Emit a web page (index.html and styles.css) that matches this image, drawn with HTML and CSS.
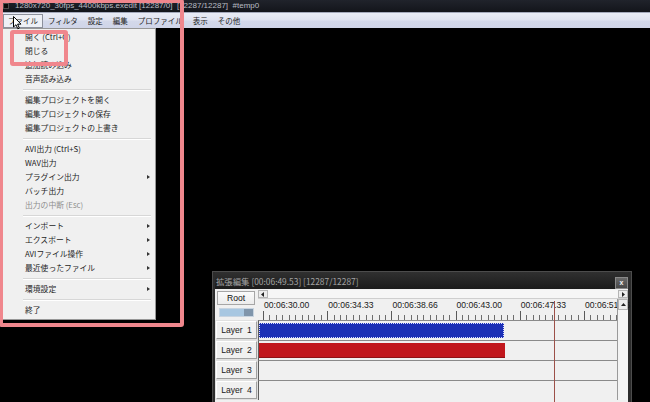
FILE: index.html
```html
<!DOCTYPE html>
<html lang="ja">
<head>
<meta charset="utf-8">
<title>AviUtl</title>
<link rel="stylesheet" href="styles.css">
</head>
<body>
<div class="screen">
  <header class="titlebar">
    <span class="app-icon"></span>
    <span class="title-text">1280x720_30fps_4400kbps.exedit [12287/0]&nbsp; [12287/12287]&nbsp; #temp0</span>
  </header>
  <nav class="menubar">
    <span class="menu-item active">ファイル</span>
    <span class="menu-item">フィルタ</span>
    <span class="menu-item">設定</span>
    <span class="menu-item">編集</span>
    <span class="menu-item">プロファイル</span>
    <span class="menu-item">表示</span>
    <span class="menu-item">その他</span>
  </nav>
  <main class="desktop">
    <ul class="dropdown">
      <li class="dd-item">開く (Ctrl+O)</li>
      <li class="dd-item">閉じる</li>
      <li class="dd-item">追加読み込み</li>
      <li class="dd-item">音声読み込み</li>
      <li class="dd-sep"></li>
      <li class="dd-item">編集プロジェクトを開く</li>
      <li class="dd-item">編集プロジェクトの保存</li>
      <li class="dd-item">編集プロジェクトの上書き</li>
      <li class="dd-sep"></li>
      <li class="dd-item">AVI出力 (Ctrl+S)</li>
      <li class="dd-item">WAV出力</li>
      <li class="dd-item sub">プラグイン出力</li>
      <li class="dd-item">バッチ出力</li>
      <li class="dd-item disabled">出力の中断 (Esc)</li>
      <li class="dd-sep"></li>
      <li class="dd-item sub">インポート</li>
      <li class="dd-item sub">エクスポート</li>
      <li class="dd-item sub">AVIファイル操作</li>
      <li class="dd-item sub">最近使ったファイル</li>
      <li class="dd-sep"></li>
      <li class="dd-item sub">環境設定</li>
      <li class="dd-sep"></li>
      <li class="dd-item">終了</li>
    </ul>

    <section class="exedit">
      <div class="ex-title">
        <span class="ex-title-text">拡張編集 [00:06:49.53] [12287/12287]</span>
        <span class="ex-close">x</span>
      </div>
      <div class="ex-client">
        <div class="ex-corner">
          <div class="root-btn">Root</div>
          <div class="zoom-slider"></div>
        </div>
        <div class="hscroll">
          <span class="sb-btn">
            <svg width="4" height="5" viewBox="0 0 4 5"><path d="M3 0 L0 2.5 L3 5 Z" fill="#222"/></svg>
          </span>
          <span class="hscroll-track"></span>
          <span class="sb-btn">
            <svg width="4" height="5" viewBox="0 0 4 5"><path d="M1 0 L4 2.5 L1 5 Z" fill="#222"/></svg>
          </span>
        </div>
        <div class="ruler">
          <span class="ruler-label">00:06:30.00</span>
          <span class="ruler-label">00:06:34.33</span>
          <span class="ruler-label">00:06:38.66</span>
          <span class="ruler-label">00:06:43.00</span>
          <span class="ruler-label">00:06:47.33</span>
          <span class="ruler-label">00:06:51.66</span>
        </div>
        <div class="vscroll">
          <span class="sb-btn up">
            <svg width="5" height="4" viewBox="0 0 5 4"><path d="M0 3 L2.5 0 L5 3 Z" fill="#222"/></svg>
          </span>
        </div>

        <div class="layer-head">Layer 1</div>
        <div class="track"><div class="clip clip-blue" style="width:245px"></div></div>
        <div class="layer-head">Layer 2</div>
        <div class="track"><div class="clip clip-red" style="width:246px"></div></div>
        <div class="layer-head">Layer 3</div>
        <div class="track"></div>
        <div class="layer-head">Layer 4</div>
        <div class="track"></div>
      </div>
      <div class="playhead"></div>
    </section>
  </main>

  <div class="mark mark-big"></div>
  <div class="mark mark-small"></div>
  <svg class="cursor" width="9" height="14" viewBox="0 0 9 14"><path d="M0.5 0.5 L0.5 11 L3 8.7 L4.8 12.8 L6.3 12.1 L4.6 8.1 L8 8.1 Z" fill="#fff" stroke="#000" stroke-width="1" stroke-linejoin="round"/></svg>
</div>
</body>
</html>
```

FILE: styles.css
```css
* {
  box-sizing: border-box;
  margin: 0;
  padding: 0;
}

html, body {
  width: 650px;
  height: 402px;
  overflow: hidden;
  background: #000;
}

body {
  font-family: "Noto Sans CJK JP", "Noto Sans", sans-serif;
}

.screen {
  position: relative;
  width: 650px;
  height: 402px;
  display: flex;
  flex-direction: column;
  overflow: hidden;
}

/* ---------- title bar ---------- */
.titlebar {
  height: 12px;
  flex: none;
  background: linear-gradient(#20232b, #13151b);
  display: flex;
  align-items: center;
  gap: 6px;
  padding-left: 3px;
}

.app-icon {
  width: 6px;
  height: 6px;
  background: #0a0a0a;
  border: 1px solid #4a4a4a;
}

.title-text {
  font: 8px/1 "Liberation Sans", sans-serif;
  color: #b9bcc3;
  white-space: nowrap;
}

/* ---------- menu bar ---------- */
.menubar {
  height: 16px;
  flex: none;
  background: linear-gradient(#e9ecf6 0%, #e0e3f0 45%, #d3d8ea 55%, #d0d5e8 100%);
  border-top: 1px solid #a4a9bb;
  display: flex;
  align-items: center;
  padding-left: 3px;
}

.menu-item {
  font-size: 7.5px;
  line-height: 12px;
  padding: 0 4px;
  color: #1c1c1c;
  border: 1px solid transparent;
  white-space: nowrap;
}

.menu-item.active {
  border-color: #8c909c;
  background: #eef0f6;
}

/* ---------- desktop ---------- */
.desktop {
  position: relative;
  flex: 1;
  background: #000;
}

/* ---------- dropdown ---------- */
.dropdown {
  position: absolute;
  left: 0;
  top: 0;
  width: 156px;
  list-style: none;
  background: #f0f0f0;
  border: 1px solid #979797;
  padding: 1px 2px 2px;
  z-index: 2;
}

.dd-item {
  position: relative;
  height: 14px;
  line-height: 14px;
  padding-left: 22px;
  font-size: 7.8px;
  color: #1e1e1e;
  white-space: nowrap;
}

.dd-item.disabled {
  color: #8e8e8e;
}

.dd-item.sub::after {
  content: "";
  position: absolute;
  left: 144px;
  top: 5px;
  border-left: 3px solid #333;
  border-top: 2px solid transparent;
  border-bottom: 2px solid transparent;
}

.dd-sep {
  height: 7px;
  margin: 0 2px 0 20px;
  background: linear-gradient(transparent 3px, #d7d7d7 3px, #d7d7d7 4px, #ffffff 4px, #ffffff 5px, transparent 5px);
}

/* ---------- extended edit window ---------- */
.exedit {
  position: absolute;
  left: 212px;
  top: 243px;
  width: 420px;
  height: 140px;
  background: #2c2c2c;
  border: 1px solid #4c4c4c;
  padding: 0 3px 0 2px;
  display: flex;
  flex-direction: column;
}

.ex-title {
  height: 17px;
  flex: none;
  display: flex;
  align-items: center;
  justify-content: space-between;
  padding-left: 1px;
  background: linear-gradient(#303030, #1b1b1b);
}

.ex-title-text {
  font-size: 8.4px;
  line-height: 12px;
  color: #a3a3a3;
  white-space: nowrap;
}

.ex-close {
  width: 13px;
  height: 12px;
  margin-top: 4px;
  background: linear-gradient(#6a6a6a, #474747);
  border: 1px solid #8a8a8a;
  color: #f2f2f2;
  font: bold 7px/10px "Liberation Sans", sans-serif;
  text-align: center;
}

.ex-client {
  flex: 1;
  background: #f0f0f0;
  display: grid;
  grid-template-columns: 43px 359px 11px;
  grid-template-rows: 10px 21px 20px 20px 20px 20px;
}

.ex-corner {
  grid-column: 1;
  grid-row: 1 / 3;
  padding: 2px 3px 0 2px;
}

.root-btn {
  width: 38px;
  height: 14px;
  border: 1px solid #a6a6a6;
  background: linear-gradient(#fbfbfb, #ececec);
  font: 8.6px/12px "Liberation Sans", sans-serif;
  color: #111;
  text-align: center;
}

.zoom-slider {
  width: 35px;
  height: 9px;
  margin: 3px 0 0 2px;
  background: linear-gradient(90deg, #a8c7e1 0, #a8c7e1 24px, #7f95ab 24px);
  border: 1px solid #c8d4e0;
}

.hscroll {
  grid-column: 2 / 4;
  grid-row: 1;
  display: flex;
  align-items: stretch;
  border-bottom: 1px solid #cfcfcf;
  padding-top: 1px;
}

.hscroll-track {
  flex: 1;
  background: #f6f6f6;
}

.sb-btn {
  width: 10px;
  display: flex;
  align-items: center;
  justify-content: center;
  background: #ececec;
  border: 1px solid #b4b4b4;
}

.sb-btn.up {
  height: 11px;
  width: 10px;
}

.ruler {
  grid-column: 2;
  grid-row: 2;
  display: flex;
  padding-left: 6px;
  background:
    repeating-linear-gradient(90deg, #5a5a5a 0, #5a5a5a 1px, transparent 1px, transparent 64.2px) 4.6px 12px / 100% 9px no-repeat,
    repeating-linear-gradient(90deg, #6e6e6e 0, #6e6e6e 1px, transparent 1px, transparent 6.42px) 4.6px 16px / 100% 5px no-repeat;
}

.ruler-label {
  flex: none;
  width: 64.2px;
  font: 8.6px/12px "Liberation Sans", sans-serif;
  color: #1a1a1a;
  white-space: nowrap;
}

.vscroll {
  grid-column: 3;
  grid-row: 2 / 7;
  border-left: 1px solid #9a9a9a;
  background: #f3f3f3;
  display: flex;
  flex-direction: column;
}

.layer-head {
  grid-column: 1;
  margin: 1px 1px 1px 1px;
  background: #f0f0f0;
  border: 1px solid;
  border-color: #ffffff #a0a0a0 #a0a0a0 #ffffff;
  box-shadow: 0 0 0 1px #e0e0e0;
  font: 8.6px/16px "Liberation Sans", sans-serif;
  word-spacing: 2px;
  color: #1a1a1a;
  text-align: center;
}

.track {
  grid-column: 2;
  border-left: 1px solid #5e5e5e;
  border-top: 1px solid #8a8a8a;
  background: #f0f0f0;
  padding-top: 2px;
}

.clip {
  height: 15px;
}

.clip-blue {
  background: #1b2fb6;
  outline: 1px dotted #d8ddff;
  outline-offset: -1px;
}

.clip-red {
  background: #c1171d;
  border-bottom: 1px solid #8e1216;
}

.playhead {
  position: absolute;
  left: 341px;
  top: 29px;
  bottom: 0;
  width: 1px;
  background: #9c5048;
}

/* ---------- annotations ---------- */
.mark {
  position: absolute;
  border: 4px solid #f0878d;
  border-radius: 3px;
  pointer-events: none;
  z-index: 5;
}

.mark-big {
  left: -1px;
  top: -1px;
  width: 185px;
  height: 328px;
}

.mark-small {
  left: 10px;
  top: 30px;
  width: 58px;
  height: 36px;
}

.cursor {
  position: absolute;
  left: 13px;
  top: 16px;
  z-index: 6;
}
```
